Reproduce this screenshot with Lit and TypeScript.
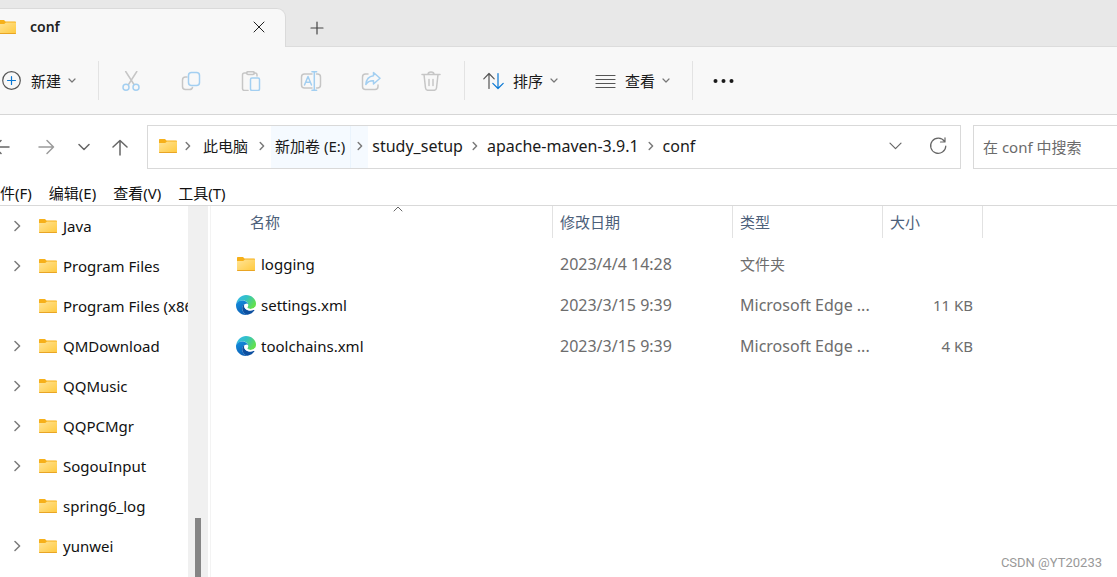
import { LitElement, html, css, svg } from "lit";
import { customElement, property, state } from "lit/decorators.js";

const edgeIcon = html`<svg class="edge" width="20" height="20" viewBox="0 0 20 20" aria-hidden="true">
  <defs>
    <linearGradient id="e1" x1="0" y1="0" x2="1" y2="0.5"><stop offset="0" stop-color="#35b8f0"/><stop offset="0.5" stop-color="#33c1c4"/><stop offset="1" stop-color="#62e04f"/></linearGradient>
    <linearGradient id="e2" x1="0" y1="0" x2="0.4" y2="1"><stop offset="0" stop-color="#1490df"/><stop offset="1" stop-color="#0d62b8"/></linearGradient>
  </defs>
  <path d="M0.3 8.600C1.200 3.600 5.200 0 10 0c5.800 0 10 4.300 10 8.800 0 3.300-2.600 5.200-5.300 5.200-2.200 0-3.400-.8-3.400-1.500 0-.6.9-.9.9-2.500C12.200 7.500 9.800 5.400 6.600 5.400 3.600 5.400 1.400 6.800.3 8.600z" fill="url(#e1)"/>
  <path d="M.3 8.600C1.500 6.500 3.700 5.400 6.300 5.400c3.400 0 5.800 2.200 5.900 4.600-.4-1.100-1.400-1.500-2.300-1.300C7.500 9.200 6.200 11 6.200 13.200c0 3 2.200 5.900 5.600 6.500C5.600 21 0 16.200 0 10.200c0-.6.1-1.100.3-1.600z" fill="url(#e2)"/>
  <path d="M8.500 9.200c-1.800 1-2.300 2.500-2.300 4 0 3 2.200 5.900 5.600 6.500 2.900-.4 5.200-2.100 6.700-4.400.3-.5-.1-.8-.6-.6-1 .5-2.200.8-3.400.8-3.600 0-6.300-2.200-6.300-4.600 0-.6.1-1.200.3-1.700z" fill="#0c4fa0"/>
  <path d="M8.300 11C8.400 9.300 10 8.300 11.300 8.800Q12 9.200 12.200 10C12.200 11.500 11.300 11.900 11.300 12.500C11.300 13.200 12.500 14 14.700 14C16.500 14 18.200 13.200 19.200 12L20 13.500L18.700 14.900Q18.400 14.500 17.900 14.700C16.900 15.200 15.700 15.500 14.500 15.500C11 15.500 8.300 13.400 8.300 11z" fill="#fff"/>
</svg>`;

const folderIcon = html`<svg class="folder" width="18" height="14" viewBox="0 0 18 14" aria-hidden="true">
  <defs><linearGradient id="f" x1="0" y1="0" x2="1" y2="1"><stop offset="0" stop-color="#ffe498"/><stop offset="1" stop-color="#ffc93c"/></linearGradient></defs>
  <path d="M0 .8Q0 0 .8 0H6l1.500 1.500H17.200q.8 0 .8.800V6H0z" fill="#f6b01a"/>
  <path d="M0 4H6.200L8 2.500H18V13.200q0 .8-.8.800H.8Q0 14 0 13.200z" fill="url(#f)"/>
  <path d="M0 12.900H18q0 1.100-.8 1.100H.8Q0 14 0 12.900z" fill="#e9a524"/>
</svg>`;

const line = (w: number, h: number, d: string, cls = "") =>
  html`<svg class="ln ${cls}" width=${w} height=${h} viewBox="0 0 ${w} ${h}" aria-hidden="true">${svg`<path d=${d} />`}</svg>`;

const chevDown = line(8, 8, "M1 2L4 5L7 2");
const chevRight = line(6, 10, "M1.200 1.500L4.600 5L1.200 8.500", "mid");

const icons = {
  cut: html`<svg class="ln" width="20" height="20" viewBox="0 0 20 20"><path class="g" d="M4.700.5L13 13.500M15.800.5L7.500 13.500"/><circle class="b" cx="5" cy="16.200" r="3"/><circle class="b" cx="15" cy="16.200" r="3"/></svg>`,
  copy: html`<svg class="ln" width="20" height="20" viewBox="0 0 20 20"><path class="g" d="M6 6H4.500Q1.500 6 1.500 9V15.500Q1.500 18.500 4.500 18.500H8.500Q11 18.500 11.500 16.500"/><rect class="b" x="7.500" y="1.500" width="11" height="13" rx="3"/></svg>`,
  paste: html`<svg class="ln" width="20" height="20" viewBox="0 0 20 20"><path class="g" d="M6 2H3.500Q1.500 2 1.500 4V17.500Q1.500 19.500 3.500 19.500H7M12.500 2H14Q16 2 16 4V5"/><rect class="g" x="5.500" y=".7" width="8" height="2.800" rx="1.400"/><rect class="b" x="9.500" y="7" width="9" height="12.500" rx="1.500"/></svg>`,
  rename: html`<svg class="ln" width="22" height="20" viewBox="0 0 22 20"><path class="g" d="M12 3H4.500Q1.500 3 1.500 6V14Q1.500 17 4.500 17H12M16.500 3H17.500Q20.500 3 20.500 6V14Q20.500 17 17.500 17H16.500"/><path class="b" d="M4.500 14L8 5.500L11.500 14M5.800 11.300H10.200M14.300 1V19M12 .7H16.600M12 19.300H16.600"/></svg>`,
  share: html`<svg class="ln" width="20" height="20" viewBox="0 0 20 20"><path class="g" d="M7 3H4.500Q1.500 3 1.500 6V15.500Q1.500 18.500 4.500 18.500H14Q17 18.500 17 15.500V14"/><path class="b" d="M12.500 1.500L19 7.300L12.500 13V9.800Q7.500 9.500 4.800 13.500Q5.500 5.500 12.500 4.700z"/></svg>`,
  trash: html`<svg class="ln" width="20" height="20" viewBox="0 0 20 20"><path class="g" d="M1 3.500H19M7 3.500Q7 1 10 1Q13 1 13 3.500M3 3.500L4.500 17Q4.800 19.300 7 19.300H13Q15.200 19.300 15.500 17L17 3.500M8 8.500V14.500M12 8.500V14.500"/></svg>`,
};

const actions: [string, unknown][] = [
  ["剪切", icons.cut], ["复制", icons.copy], ["粘贴", icons.paste],
  ["重命名", icons.rename], ["共享", icons.share], ["删除", icons.trash],
];

const base = css`
  * { box-sizing: border-box; }
  button { font: inherit; color: inherit; background: none; border: 0; padding: 0; margin: 0; display: flex; align-items: center; flex: none; white-space: nowrap; }
  svg { display: block; flex: none; }
  .ln { fill: none; stroke: currentColor; stroke-width: 1.2; stroke-linecap: round; stroke-linejoin: round; }
  .mid { color: #7a7a7a; stroke-width: 1.5; }
`;

@customElement("command-bar")
export class CommandBar extends LitElement {
  static styles = [base, css`
    :host { display: flex; align-items: center; height: 68px; background: #f8f8f8; border-bottom: 1px solid #d6d6d6; color: #1a1a1a; overflow: hidden; }
    .new { padding-left: 2px; width: 98px; }
    .word { margin-right: 7px; margin-left: 9px; }
    .small { color: #777; display: flex; }
    .sep { width: 1px; height: 39px; background: #e3e3e3; flex: none; }
    .acts { display: flex; width: 365px; padding-left: 2px; flex: none; }
    .act { width: 60px; height: 40px; justify-content: center; }
    .act .ln { stroke-width: 1.5; }
    .g { stroke: #c6c6c6; }
    .b { stroke: #a3cff1; }
    .grey { stroke: #555; }
    .blue { stroke: #0a78d4; }
    .sort { padding-left: 18px; width: 112px; }
    .view { padding-left: 18px; width: 115px; }
    .more { padding-left: 20px; }
  `];
  render() {
    return html`
      <button class="new">
        <svg class="ln" width="20" height="20" viewBox="0 0 20 20"><circle class="grey" cx="9.500" cy="9.500" r="8.800"/><path class="blue" d="M5.500 9.500H13.500M9.500 5.500V13.500"/></svg>
        <span class="word">新建</span><span class="small">${chevDown}</span>
      </button>
      <span class="sep"></span>
      <div class="acts">${actions.map(([n, i]) => html`<button class="act" aria-label=${n} disabled>${i}</button>`)}</div>
      <span class="sep"></span>
      <button class="sort">
        <svg class="ln" width="21" height="18" viewBox="0 0 21 18"><path class="grey" d="M6 16.500V1.500M.8 6.800L6 1.500L11.200 6.800"/><path class="blue" d="M15 1.500V16.500M9.800 11.300L15 16.500L20.200 11.300"/></svg>
        <span class="word">排序</span><span class="small">${chevDown}</span>
      </button>
      <button class="view">
        <svg class="ln" width="21" height="14" viewBox="0 0 21 14"><path class="grey" d="M1 1.500H20M1 5.500H20M1 9.500H20M1 13.500H20"/></svg>
        <span class="word">查看</span><span class="small">${chevDown}</span>
      </button>
      <span class="sep"></span>
      <button class="more" aria-label="更多"><svg width="21" height="6" viewBox="0 0 21 6" fill="#1a1a1a"><circle cx="2.500" cy="3" r="2"/><circle cx="10.500" cy="3" r="2"/><circle cx="18.500" cy="3" r="2"/></svg></button>
    `;
  }
}

@customElement("address-row")
export class AddressRow extends LitElement {
  static styles = [base, css`
    :host { display: flex; align-items: center; padding-top: 10px; color: #666; overflow: hidden; }
    .nav { display: flex; align-items: center; width: 147px; flex: none; }
    .back { margin-left: -7px; }
    .fwd { margin-left: 28px; color: #9b9b9b; }
    .down { margin-left: 23px; }
    .up { margin-left: 22px; }
    .nav .ln { stroke-width: 1.5; }
    .bar { display: flex; align-items: stretch; flex: 1 1 814px; height: 44px; border: 1px solid #d9d9d9; color: #1a1a1a; min-width: 0; }
    .bar button { padding-bottom: 2px; }
    .root { padding-left: 11px; }
    .bar .crumb { padding: 0 4px 2px; }
    .latin { font-size: 16px; }
    .hot { background: #f5faff; }
    .bar .crumb.hot { border-right: 1px solid #eaf4fd; padding-right: 5px; }
    .arrow { width: 19px; justify-content: center; }
    .hot.arrow { width: 17px; }
    .first { width: 22px; }
    .arrow.tight { width: 16px; }
    .tail { display: flex; align-items: center; margin-left: auto; padding-right: 13px; gap: 27px; color: #666; }
    .search { flex: 1 1 155px; margin-left: 12px; margin-right: -11px; min-width: 0; width: 155px; height: 44px; border: 1px solid #d9d9d9; padding: 0 9px; font: inherit; background: #fff; border-radius: 0; outline: 0; }
    .search::placeholder { color: #6b6b6b; opacity: 1; }
  `];
  @property({ attribute: false }) path: string[] = [];
  render() {
    return html`
      <nav class="nav">
        <button class="back" aria-label="后退">${line(17, 16, "M16 8H1.500M8 1.500L1.500 8L8 14.500")}</button>
        <button class="fwd" aria-label="前进">${line(17, 16, "M1 8H15.500M9 1.500L15.500 8L9 14.500")}</button>
        <button class="down" aria-label="最近">${line(12, 8, "M1 1.500L6 6.500L11 1.500")}</button>
        <button class="up" aria-label="向上">${line(16, 17, "M8 16V1.500M1 8L8 1.500L15 8")}</button>
      </nav>
      <div class="bar">
        <button class="root" aria-label="位置">${folderIcon}</button>
        <button class="arrow first" aria-label="展开">${chevRight}</button>
        ${this.path.map((p, i) => html`
          <button class="crumb ${i === 1 ? "hot" : ""} ${i > 1 ? "latin" : ""}">${p}</button>
          ${i < this.path.length - 1 ? html`<button class="arrow ${i === 1 ? "hot" : ""} ${i > 1 ? "tight" : ""}" aria-label="展开">${chevRight}</button>` : ""}`)}
        <div class="tail">
          <button aria-label="历史">${line(13, 8, "M1 1.200L6.500 6.700L12 1.200")}</button>
          <button aria-label="刷新">${line(18, 18, "M15.500 4.500A7.600 7.600 0 1 0 16.800 9M16 .8V5H11.500")}</button>
        </div>
      </div>
      <input class="search" type="search" aria-label="搜索" placeholder="在 conf 中搜索" />
    `;
  }
}

@customElement("folder-tree")
export class FolderTree extends LitElement {
  static styles = [base, css`
    :host { display: flex; width: 211px; flex: none; border-right: 1px solid #f3f3f3; overflow: hidden; color: #111; }
    .list { flex: 1; min-width: 0; margin: 0; padding: 0; list-style: none; overflow: hidden; }
    .item { height: 40px; width: 100%; padding-left: 14px; overflow: hidden; justify-content: flex-start; }
    .tog { width: 25px; display: flex; flex: none; }
    .name { margin-left: 6px; flex: none; }
    .track { width: 20px; margin-right: 2px; background: #f0f0f0; display: flex; flex-direction: column; align-items: center; justify-content: flex-end; flex: none; }
    .thumb { width: 6px; height: 16%; background: #858585; }
  `];
  @property({ attribute: false }) items: [string, boolean][] = [];
  render() {
    return html`
      <ul class="list">${this.items.map(([n, open]) => html`<li><button class="item"><span class="tog">${open ? line(7, 12, "M1 1.500L5.600 6L1 10.500", "mid") : ""}</span>${folderIcon}<span class="name">${n}</span></button></li>`)}</ul>
      <div class="track"><div class="thumb"></div></div>
    `;
  }
}

interface Row { name: string; date: string; type: string; size: string; folder?: boolean }

@customElement("file-table")
export class FileTable extends LitElement {
  static styles = [base, css`
    :host { display: block; flex: 1; min-width: 0; overflow: hidden; color: #6d6d6d; }
    table { border-collapse: collapse; table-layout: fixed; width: 100%; }
    th, td { padding: 0; text-align: left; font-weight: 400; white-space: nowrap; overflow: hidden; text-overflow: ellipsis; }
    th { padding-bottom: 5px; color: #4c607a; vertical-align: top; }
    .c1 { width: 342px; } .c2 { width: 180px; } .c3 { width: 150px; } .c4 { width: 100px; }
    .col { width: 100%; height: 32px; border-right: 1px solid #e2e2e2; padding-left: 7px; position: relative; }
    .nm { padding-left: 39px; }
    .up { position: absolute; top: 0; left: 50%; margin-left: 11px; color: #666; }
    .up .ln { stroke-width: 1; }
    td { height: 41px; padding: 0 10px 0 7px; }
    .latin { font-size: 16px; }
    .file { padding-left: 25px; color: #111; }
    .link { display: flex; align-items: center; gap: 5px; color: inherit; text-decoration: none; }
    .folder { margin-right: 1px; margin-left: 1px; }
    .size { text-align: right; }
  `];
  @property({ attribute: false }) rows: Row[] = [];
  render() {
    return html`<table>
      <colgroup><col class="c1"/><col class="c2"/><col class="c3"/><col class="c4"/><col/></colgroup>
      <thead><tr>
        <th><button class="col nm">名称<span class="up">${line(10, 6, "M1 5L5 1L9 5")}</span></button></th>
        <th><button class="col">修改日期</button></th>
        <th><button class="col">类型</button></th>
        <th><button class="col">大小</button></th><th></th>
      </tr></thead>
      <tbody>${this.rows.map(r => html`<tr>
        <td class="file"><a class="link" href="#">${r.folder ? folderIcon : edgeIcon}<span>${r.name}</span></a></td>
        <td class="latin">${r.date}</td><td class=${r.folder ? "" : "latin"}>${r.type}</td><td class="size">${r.size}</td><td></td></tr>`)}</tbody>
    </table>`;
  }
}

@customElement("app-root")
export class AppRoot extends LitElement {
  static styles = [base, css`
    :host { display: flex; flex-direction: column; height: 100vh; overflow: hidden; background: #fff; position: relative; font: 15px/20px "Noto Sans", "Noto Sans CJK SC", sans-serif; color: #111; }
    .tabs { display: flex; height: 47px; flex: none; padding-top: 8px; background: #e8e8e8; border-bottom: 1px solid #dcdcdc; }
    .tab { display: flex; align-items: center; width: 286px; height: 39px; background: #f8f8f8; border: 1px solid #dadada; border-width: 1px 1px 0 0; border-radius: 0 9px 0 0; padding-right: 20px; padding-bottom: 2px; font-size: 14px; font-weight: 600; color: #222; }
    .tab .folder { margin-left: -2px; }
    .tab .ln { stroke-width: 1; }
    .title { margin-left: 14px; flex: 1; }
    .add { margin-left: 24px; padding-top: 2px; color: #444; }
    .menu { display: flex; gap: 17px; height: 37px; flex: none; padding-top: 14px; margin-left: -15px; border-bottom: 1px solid #d9d9d9; }
    .menu button { height: 20px; }
    .body { display: flex; flex: 1; min-height: 0; }
    .mark { position: absolute; right: 15px; bottom: 4px; font-family: Roboto, sans-serif; font-size: 13px; color: #999; }
  `];
  @state() private path = ["此电脑", "新加卷 (E:)", "study_setup", "apache-maven-3.9.1", "conf"];
  @state() private folders: [string, boolean][] = [
    ["Java", true], ["Program Files", true], ["Program Files (x86)", false], ["QMDownload", true], ["QQMusic", true],
    ["QQPCMgr", true], ["SogouInput", true], ["spring6_log", false], ["yunwei", true],
  ];
  @state() private rows: Row[] = [
    { name: "logging", date: "2023/4/4 14:28", type: "文件夹", size: "", folder: true },
    { name: "settings.xml", date: "2023/3/15 9:39", type: "Microsoft Edge ...", size: "11 KB" },
    { name: "toolchains.xml", date: "2023/3/15 9:39", type: "Microsoft Edge ...", size: "4 KB" },
  ];
  render() {
    return html`
      <header class="tabs">
        <div class="tab">${folderIcon}<span class="title">conf</span><button aria-label="关闭">${line(12, 12, "M1 1L11 11M11 1L1 11")}</button></div>
        <button class="add" aria-label="新标签页">${line(14, 14, "M7 1V13M1 7H13")}</button>
      </header>
      <command-bar></command-bar>
      <address-row .path=${this.path}></address-row>
      <div class="menu">${["文件(F)", "编辑(E)", "查看(V)", "工具(T)"].map(m => html`<button>${m}</button>`)}</div>
      <main class="body"><folder-tree .items=${this.folders}></folder-tree><file-table .rows=${this.rows}></file-table></main>
      <span class="mark">CSDN @YT20233</span>
    `;
  }
}
